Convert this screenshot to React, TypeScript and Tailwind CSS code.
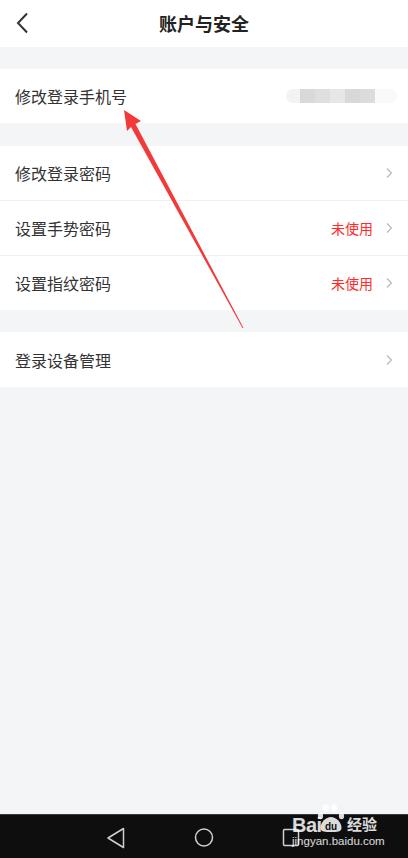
import React from 'react';

const FONT = { fontFamily: '"Noto Sans CJK SC", "Noto Sans", sans-serif' };
const LATIN = { fontFamily: '"Liberation Sans", sans-serif' };

const Chevron = () => (
  <svg width="8" height="12" viewBox="0 0 8 12" className="ml-[12px]">
    <path d="M2 1.5 L6.5 6 L2 10.5" fill="none" stroke="#b8b8b8" strokeWidth="1.2" />
  </svg>
);

interface RowProps {
  label: string;
  status?: string;
  arrow?: boolean;
  border?: boolean;
  children?: React.ReactNode;
}

const Row: React.FC<RowProps> = ({ label, status, arrow = true, border = false, children }) => (
  <div className={`flex items-center px-[15px] bg-white ${border ? 'h-[55px] border-b border-[#f0f0f0]' : 'h-[54px]'}`}>
    <span className="text-[16px] text-[#333] flex-1">{label}</span>
    {status && <span className="text-[14px] text-[#ff2a2a]">{status}</span>}
    {children}
    {arrow && <Chevron />}
  </div>
);

export default function App() {
  return (
    <div className="relative w-[408px] h-[858px] bg-[#f4f5f7] flex flex-col overflow-hidden" style={FONT}>
      {/* header */}
      <div className="h-[47px] bg-white relative flex items-center justify-center">
        <svg width="16" height="24" viewBox="0 0 16 24" className="absolute left-[15px] top-[11px]">
          <path d="M12 2.5 L3 12 L12 21.5" fill="none" stroke="#333" strokeWidth="2" />
        </svg>
        <span className="text-[18px] font-bold text-[#222]">账户与安全</span>
      </div>

      <div className="h-[22px]" />
      <Row label="修改登录手机号" arrow={false}>
        {/* blurred phone number */}
        <div className="flex h-[14px] -mr-[4px]">
          <div className="w-[14px] bg-[#f3f3f3] rounded-l-full" />
          <div className="w-[15px] bg-[#d9d9d9]" />
          <div className="w-[15px] bg-[#dfdfdf]" />
          <div className="w-[15px] bg-[#e7e7e7]" />
          <div className="w-[15px] bg-[#d8d8d8]" />
          <div className="w-[15px] bg-[#dcdcdc]" />
          <div className="w-[22px] bg-[#f9f9f9] rounded-r-full" />
        </div>
      </Row>

      <div className="h-[23px]" />
      <Row label="修改登录密码" border />
      <Row label="设置手势密码" status="未使用" border />
      <Row label="设置指纹密码" status="未使用" />

      <div className="h-[22px]" />
      <div className="flex items-center h-[55px] px-[15px] bg-white">
        <span className="text-[16px] text-[#333] flex-1">登录设备管理</span>
        <Chevron />
      </div>

      <div className="flex-1" />

      {/* system nav bar */}
      <div className="h-[44px] bg-[#0e0e0e] border-t border-[#3a3a3a] relative">
        <svg width="408" height="44" viewBox="0 0 408 44" className="absolute left-0 top-0">
          <path d="M123.5 13.5 L108 23 L123.5 32.5 Z" fill="none" stroke="#cfcfcf" strokeWidth="1.5" strokeLinejoin="round" />
          <circle cx="204" cy="22.5" r="8.5" fill="none" stroke="#cfcfcf" strokeWidth="1.5" />
          <rect x="283.5" y="14.5" width="15" height="16" rx="1" fill="none" stroke="#cfcfcf" strokeWidth="1.5" />
        </svg>
      </div>

      {/* baidu watermark */}
      <span className="absolute left-[292px] top-[815px] text-[20px] font-bold leading-none tracking-[-0.5px] text-white/85" style={LATIN}>Bai</span>
      <svg width="28" height="30" viewBox="0 0 28 30" className="absolute left-[317px] top-[803px]">
        <g fill="rgba(255,255,255,0.85)">
          <ellipse cx="9" cy="5" rx="3" ry="3.8" />
          <ellipse cx="17" cy="5" rx="3" ry="3.8" />
          <ellipse cx="3.5" cy="13" rx="2.6" ry="3.2" />
          <ellipse cx="24.5" cy="13" rx="2.6" ry="3.2" />
          <path d="M3.5 25 C3.5 19 9 14 14 14 C19 14 24.5 19 24.5 25 C24.5 29 20 29 14 29 C8 29 3.5 29 3.5 25 Z" />
        </g>
        <text x="14" y="27" textAnchor="middle" fontSize="10" fontWeight="bold" fill="#0e0e0e" fontFamily="Liberation Sans, sans-serif">du</text>
      </svg>
      <span className="absolute left-[347px] top-[815px] text-[15px] font-bold leading-[18px] text-white/85">经验</span>
      <span className="absolute left-[292px] top-[834px] text-[11.5px] leading-[14px] text-white/85" style={LATIN}>jingyan.baidu.com</span>

      {/* annotation arrow */}
      <svg width="408" height="858" viewBox="0 0 408 858" className="absolute left-0 top-0 pointer-events-none">
        <polygon points="124,110 141,121 135.5,124 243.5,328 242.5,328 131,127 127,131" fill="#f23a3a" />
      </svg>
    </div>
  );
}
